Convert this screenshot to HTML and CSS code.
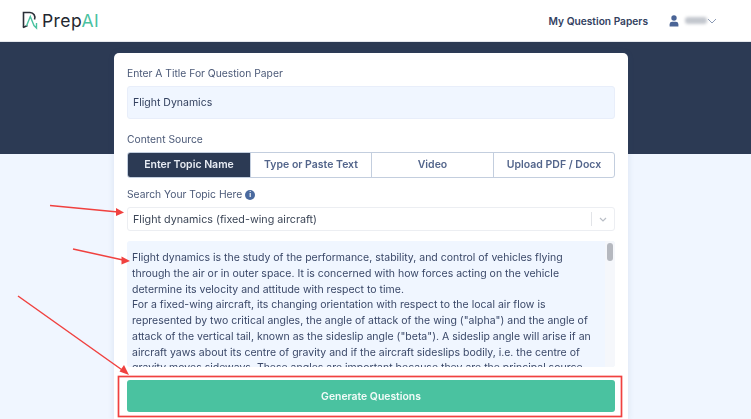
FILE: index.html
```html
<!DOCTYPE html>
<html lang="en">
<head>
<meta charset="utf-8">
<title>PrepAI</title>
<link rel="stylesheet" href="styles.css">
</head>
<body>
<header class="topbar">
  <div class="logo">
    <svg class="logo-mark" width="16" height="20" viewBox="0 0 16 20" fill="none">
      <path d="M1.5 16.500V1.500h6.500a5 5 0 0 1 4.500 7" stroke="#2b2f38" stroke-width="1.600"/>
      <path d="M1 16.500L5.500 14.500" stroke="#2b2f38" stroke-width="1.600"/>
      <path d="M4.500 15L8.300 5.500L12 14.500L14.500 17V12" stroke="#4ac2a0" stroke-width="1.400"/>
    </svg>
    <span class="logo-text">Prep<span class="logo-ai">AI</span></span>
  </div>
  <nav class="nav">
    <span class="nav-link">My Question Papers</span>
    <span class="user">
      <svg width="10" height="12" viewBox="0 0 10 12"><circle cx="5" cy="3" r="2.700" fill="#4a6496"/><path d="M0.600 11.500V9a2.500 2.500 0 0 1 2.500-2.200h3.800A2.500 2.500 0 0 1 9.400 9v2.500z" fill="#4a6496"/></svg>
      <span class="user-name"></span>
      <svg width="10" height="6" viewBox="0 0 10 6" fill="none"><path d="M1 1l4 4 4-4" stroke="#8b9ab5" stroke-width="1"/></svg>
    </span>
  </nav>
</header>
<div class="hero">
  <main class="card">
    <label class="label">Enter A Title For Question Paper</label>
    <div class="input">Flight Dynamics</div>
    <label class="label label-source">Content Source</label>
    <div class="tabs">
      <div class="tab tab-active">Enter Topic Name</div>
      <div class="tab">Type or Paste Text</div>
      <div class="tab">Video</div>
      <div class="tab">Upload PDF / Docx</div>
    </div>
    <label class="label label-search">Search Your Topic Here <span class="info">i</span></label>
    <div class="select">
      <span>Flight dynamics (fixed-wing aircraft)</span>
      <span class="select-end">
        <svg width="8" height="5" viewBox="0 0 8 5" fill="none"><path d="M1 1l3 3 3-3" stroke="#b9bec6" stroke-width="1.200"/></svg>
      </span>
    </div>
    <div class="textarea">
      <p class="copy">Flight dynamics is the study of the performance, stability, and control of vehicles flying<br>through the air or in outer space. It is concerned with how forces acting on the vehicle<br>determine its velocity and attitude with respect to time.<br>For a fixed-wing aircraft, its changing orientation with respect to the local air flow is<br>represented by two critical angles, the angle of attack of the wing ("alpha") and the angle of<br>attack of the vertical tail, known as the sideslip angle ("beta"). A sideslip angle will arise if an<br>aircraft yaws about its centre of gravity and if the aircraft sideslips bodily, i.e. the centre of<br>gravity moves sideways. These angles are important because they are the principal source</p>
      <div class="scrollbar"><div class="thumb"></div></div>
    </div>
    <button class="generate">Generate Questions</button>
  </main>
</div>
<svg class="annotations" width="751" height="419" viewBox="0 0 751 419" fill="none">
  <rect x="118.500" y="376.500" width="503" height="40" stroke="#f0413f" stroke-width="1.700"/>
  <g stroke="#f0413f" stroke-width="1.500">
    <path d="M50 205.500L118 212"/>
    <path d="M73 249L123 260"/>
    <path d="M18 296L125 372"/>
  </g>
  <g fill="#f0413f">
    <path d="M124 212.500L116 208V216z"/>
    <path d="M130 261L121.500 256.500V264.500z"/>
    <path d="M129 375L119.500 371.500L124 365z"/>
  </g>
</svg>
</body>
</html>
```
FILE: styles.css
```css
* { box-sizing: border-box; }
html, body { margin: 0; height: 419px; overflow: hidden; }
body {
  position: relative;
  width: 751px;
  background: #f0f6ff;
  font-family: Inter, "Open Sans", sans-serif;
  color: #33415f;
  filter: blur(0.4px);
}
.topbar {
  height: 42px;
  background: #fff;
  border-bottom: 1px solid #e4e7ec;
  display: flex;
  align-items: center;
  justify-content: space-between;
  padding: 0 34px 0 22px;
}
.logo { display: flex; align-items: center; gap: 4px; }
.logo-mark { display: block; }
.logo-text { font-size: 17.500px; font-weight: 400; letter-spacing: 0.4px; color: #23272f; }
.logo-ai { color: #4ac2a0; }
.nav { display: flex; align-items: center; gap: 21px; }
.nav-link { font-size: 10.200px; font-weight: 600; color: #33415f; }
.user { display: flex; align-items: center; }
.user-name { width: 22px; height: 7px; margin: 0 0 0 6px; background: #c3c7ce; border-radius: 3px; filter: blur(1.500px); }
.hero {
  background: #2c3a54;
  height: 112px;
}
.card {
  width: 514px;
  height: 370px;
  margin-left: 114px;
  position: relative;
  top: 11px;
  background: #fff;
  border-radius: 5px;
  padding: 14px 13px 0;
  box-shadow: 0 0 6px rgba(60, 90, 140, 0.12);
}
.label { display: block; font-size: 10.300px; line-height: 13px; color: #4c5a78; }
.input {
  height: 33px;
  margin-top: 6px;
  padding: 0 5px;
  background: #f0f6ff;
  border: 1px solid #e8eefa;
  border-radius: 3px;
  font-size: 10.500px;
  line-height: 31px;
  color: #33415f;
}
.label-source { margin-top: 14px; }
.tabs {
  display: grid;
  grid-template-columns: 122px 121px 122px 1fr;
  height: 26px;
  margin-top: 6px;
  border: 1.500px solid #c3cede;
  border-radius: 3px;
  overflow: hidden;
}
.tab {
  font-size: 10.500px;
  font-weight: 600;
  line-height: 23px;
  text-align: center;
  color: #53658b;
  border-left: 1.500px solid #c3cede;
}
.tab-active { background: #2c3a54; color: #e7ebf3; border-left: 0; }
.label-search { margin-top: 10px; display: flex; align-items: center; gap: 3px; }
.info {
  width: 10px;
  height: 10px;
  border-radius: 50%;
  background: #4a6a9f;
  color: #fff;
  font-size: 7px;
  line-height: 10px;
  text-align: center;
  font-weight: 700;
}
.select {
  height: 24px;
  margin-top: 6px;
  padding: 0 5px;
  border: 1px solid #eceef2;
  border-radius: 3px;
  display: flex;
  align-items: center;
  justify-content: space-between;
  font-size: 10.750px;
  color: #3b4556;
}
.select-end {
  display: flex;
  align-items: center;
  justify-content: center;
  width: 22px;
  height: 14px;
  margin-right: -4px;
  border-left: 1px solid #e2e4e8;
}
.textarea {
  position: relative;
  height: 126px;
  margin-top: 10px;
  padding: 9px 5px 0;
  background: #f0f6ff;
  border-radius: 3px;
  overflow: hidden;
}
.copy {
  margin: 0;
  font-size: 10.500px;
  line-height: 15.750px;
  white-space: nowrap;
  color: #3a4868;
}
.scrollbar {
  position: absolute;
  top: 0;
  right: 0;
  width: 10px;
  height: 100%;
  background: #f5f7fb;
}
.thumb { width: 6px; height: 18px; margin: 2px 0 0 2px; border-radius: 3px; background: #b5b8bf; }
.generate {
  display: block;
  width: 100%;
  height: 32px;
  margin-top: 13px;
  border: 0;
  border-radius: 3px;
  background: #4ac2a0;
  color: #f2fbf8;
  font-family: inherit;
  font-size: 10.400px;
  font-weight: 600;
}
.annotations { position: absolute; left: 0; top: 0; pointer-events: none; }
```
